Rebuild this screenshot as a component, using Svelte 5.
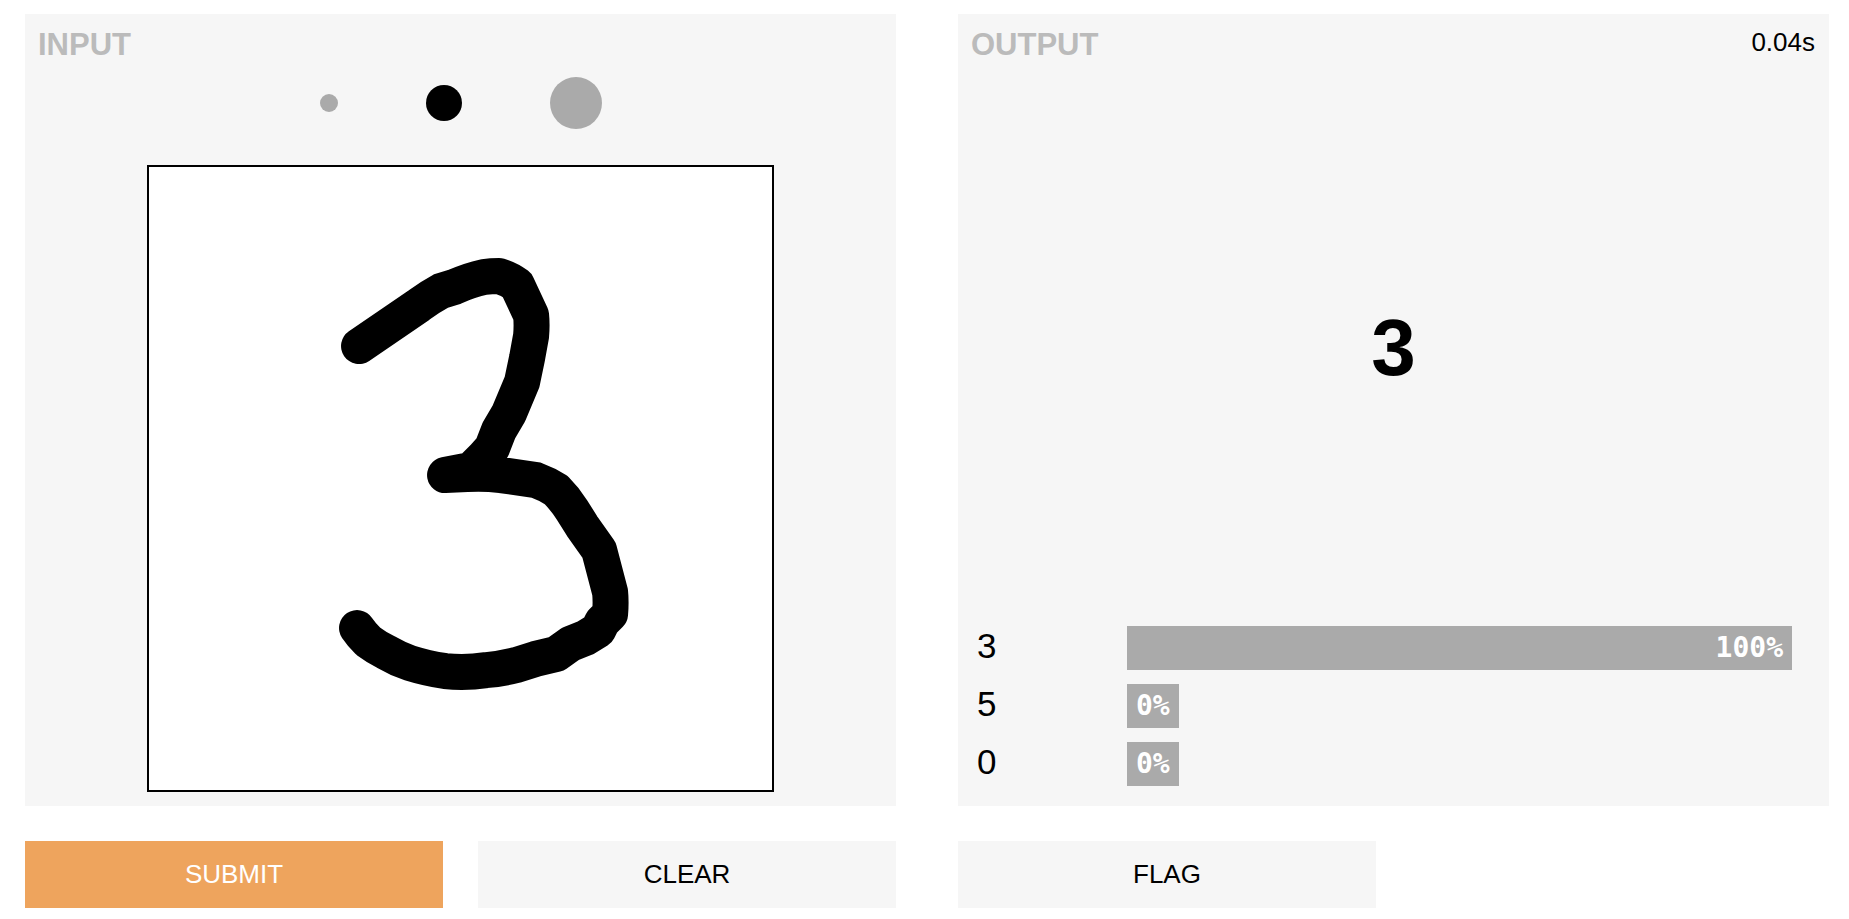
<script>
  const initialStroke =
    'M359 346 L419 305 Q430 297 441 291 L454 287 Q470 280 484 277 Q491 276 499 276 Q509 279 517 285 L531 315 Q532 325 531 336 L527 358 L522 382 L509 413 L499 430 L492 448 L484 457 L471 470 L445 475 L467 474 Q484 473 501 475 L536 480 Q547 484 556 490 Q565 499 572 510 L582 526 L599 550 L610 592 Q611 602 610 614 L602 622 L598 630 L585 638 L570 644 L556 654 L535 659 L516 665 Q500 669 486 670 Q466 673 445 671 Q426 668 410 663 Q398 659 386 652 Q376 647 368 641 Q361 634 357 628';

  const brushes = [
    { name: 'Small brush', size: 'small' },
    { name: 'Medium brush', size: 'medium' },
    { name: 'Large brush', size: 'large' }
  ];

  const confidences = [
    { label: '3', percent: 100 },
    { label: '5', percent: 0 },
    { label: '0', percent: 0 }
  ];

  let brush = $state('medium');
  let stroke = $state(initialStroke);
</script>

<main class="interface">
  <section class="column">
    <div class="panel">
      <header class="panel-header"><h2>INPUT</h2></header>
      <div class="brushes" role="radiogroup" aria-label="Brush size">
        {#each brushes as b}
          <input class="brush {b.size}" type="radio" name="brush" value={b.size} aria-label={b.name} bind:group={brush} />
        {/each}
      </div>
      <svg class="sketch" viewBox="149 167 623 623" role="img" aria-label="Sketch">
        <path d={stroke} fill="none" stroke="#000" stroke-width="36" stroke-linecap="round" stroke-linejoin="round" />
      </svg>
    </div>
    <div class="actions">
      <button class="submit" type="button">SUBMIT</button>
      <button type="button" onclick={() => (stroke = '')}>CLEAR</button>
    </div>
  </section>

  <section class="column">
    <div class="panel">
      <header class="panel-header">
        <h2>OUTPUT</h2>
        <span class="time">0.04s</span>
      </header>
      <div class="prediction">3</div>
      <ul class="confidences">
        {#each confidences as c}
          <li>
            <span class="label">{c.label}</span>
            <div class="track">
              <div class="bar" style="width: {c.percent}%">{c.percent}%</div>
            </div>
          </li>
        {/each}
      </ul>
    </div>
    <div class="actions">
      <button type="button">FLAG</button>
    </div>
  </section>
</main>

<style>
  :global(body) {
    margin: 0;
    background: #fff;
  }
  .interface {
    display: grid;
    grid-template-columns: 1fr 1fr;
    gap: 62px;
    padding: 14px 20px 11px 25px;
    font-family: Arial, 'Liberation Sans', sans-serif;
    color: #000;
  }
  .column {
    display: flex;
    flex-direction: column;
    gap: 35px;
    min-width: 0;
  }
  .panel {
    flex: 1;
    display: flex;
    flex-direction: column;
    background: #f6f6f6;
  }
  .panel-header {
    display: flex;
    justify-content: space-between;
    align-items: flex-start;
    padding: 13px 14px 0 13px;
  }
  h2 {
    margin: 0;
    font-size: 31px;
    line-height: 36px;
    font-weight: bold;
    color: #bbb;
  }
  .time {
    font-size: 26px;
    line-height: 30px;
  }
  .brushes {
    display: flex;
    justify-content: center;
    align-items: center;
    gap: 88px;
    margin: 14px 0 36px;
  }
  .brush {
    appearance: none;
    margin: 0;
    border-radius: 50%;
    background: #aaa;
    cursor: pointer;
  }
  .brush:checked {
    background: #000;
  }
  .small {
    width: 18px;
    height: 18px;
  }
  .medium {
    width: 36px;
    height: 36px;
  }
  .large {
    width: 52px;
    height: 52px;
  }
  .sketch {
    box-sizing: border-box;
    width: 72%;
    aspect-ratio: 1;
    margin: 0 auto 14px;
    border: 2px solid #000;
    background: #fff;
  }
  .prediction {
    flex: 1;
    display: flex;
    align-items: center;
    justify-content: center;
    padding-top: 6px;
    font-size: 80px;
    line-height: 92px;
    font-weight: bold;
  }
  .confidences {
    display: flex;
    flex-direction: column;
    gap: 14px;
    margin: 0;
    padding: 0 37px 20px 19px;
    list-style: none;
  }
  li {
    display: flex;
  }
  .label {
    width: 150px;
    font-size: 35px;
    line-height: 40px;
  }
  .track {
    flex: 1;
  }
  .bar {
    box-sizing: border-box;
    min-width: min-content;
    padding: 0 9px;
    background: #aaa;
    color: #fff;
    font-family: Consolas, 'DejaVu Sans Mono', monospace;
    font-size: 28px;
    line-height: 44px;
    font-weight: bold;
    text-align: right;
  }
  .actions {
    display: grid;
    grid-template-columns: 1fr 1fr;
    gap: 35px;
  }
  button {
    padding: 18px;
    border: 0;
    background: #f6f6f6;
    color: #000;
    font: 26px/31px Arial, 'Liberation Sans', sans-serif;
    cursor: pointer;
  }
  .submit {
    background: #eea45d;
    color: #fff;
  }
</style>
